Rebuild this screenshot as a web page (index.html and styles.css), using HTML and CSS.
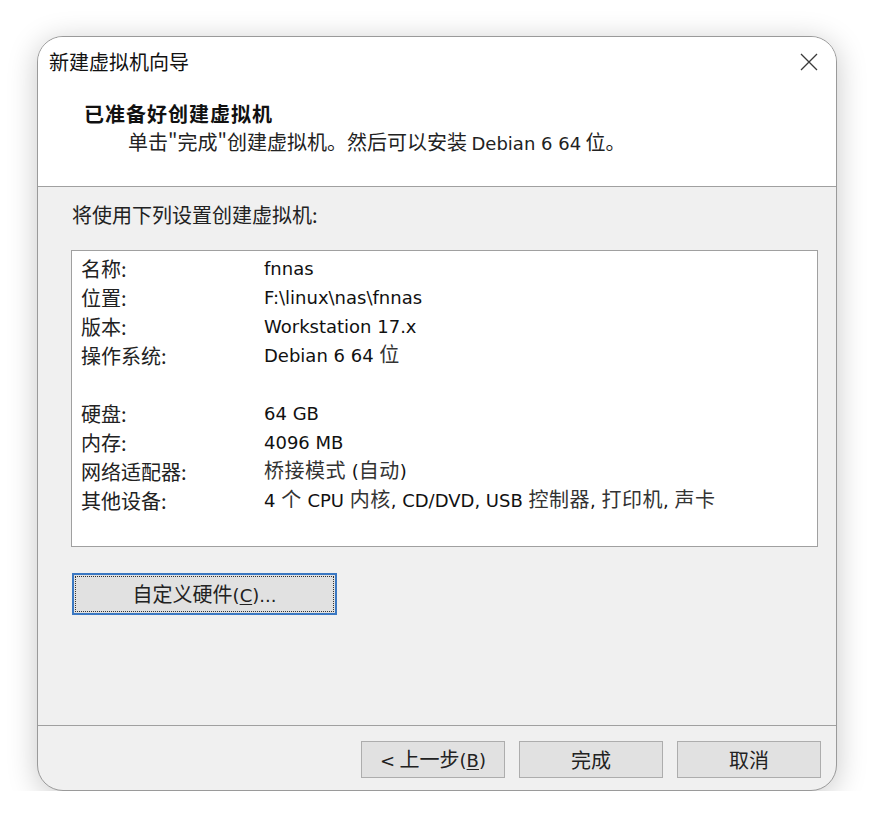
FILE: index.html
```html
<!DOCTYPE html>
<html lang="zh-CN">
<head>
<meta charset="utf-8">
<title>新建虚拟机向导</title>
<link rel="stylesheet" href="styles.css">
</head>
<body>
<div class="stage">
  <div class="dialog">
    <header class="header">
      <div class="titlebar">
        <span class="title">新建虚拟机向导</span>
        <button class="close" aria-label="关闭">
          <svg viewBox="0 0 18 18" width="18" height="18"><path d="M1 1L17 17M17 1L1 17" stroke="#3a3a3a" stroke-width="1.3" fill="none"/></svg>
        </button>
      </div>
      <h1 class="heading">已准备好创建虚拟机</h1>
      <p class="subtitle">单击"完成"创建虚拟机。然后可以安装 <span class="lat">Debian 6 64</span> 位。</p>
    </header>
    <main class="body">
      <p class="intro">将使用下列设置创建虚拟机:</p>
      <div class="summary">
        <div class="row"><span class="label">名称:</span><span class="value">fnnas</span></div>
        <div class="row"><span class="label">位置:</span><span class="value">F:\linux\nas\fnnas</span></div>
        <div class="row"><span class="label">版本:</span><span class="value">Workstation 17.x</span></div>
        <div class="row"><span class="label">操作系统:</span><span class="value">Debian 6 64 <span class="zh">位</span></span></div>
        <div class="row"></div>
        <div class="row"><span class="label">硬盘:</span><span class="value">64 GB</span></div>
        <div class="row"><span class="label">内存:</span><span class="value">4096 MB</span></div>
        <div class="row"><span class="label">网络适配器:</span><span class="value"><span class="zh">桥接模式</span> (<span class="zh">自动</span>)</span></div>
        <div class="row"><span class="label">其他设备:</span><span class="value">4 <span class="zh">个</span> CPU <span class="zh">内核</span>, CD/DVD, USB <span class="zh">控制器</span>, <span class="zh">打印机</span>, <span class="zh">声卡</span></span></div>
      </div>
      <button class="btn custom"><span>自定义硬件<span class="lat">(<u>C</u>)...</span></span></button>
    </main>
    <footer class="footer">
      <button class="btn"><span><span class="lat">&lt;</span> 上一步<span class="lat">(<u>B</u>)</span></span></button>
      <button class="btn"><span>完成</span></button>
      <button class="btn"><span>取消</span></button>
    </footer>
  </div>
</div>
</body>
</html>
```

FILE: styles.css
```css
* { box-sizing: border-box; }

html, body {
  margin: 0;
  padding: 0;
  background: #ffffff;
}

body {
  font-family: "Noto Sans CJK SC", sans-serif;
  color: #151515;
}

.stage {
  padding: 36px 0 0 37px;
}

.dialog {
  width: 800px;
  height: 755px;
  display: flex;
  flex-direction: column;
  background: #f0f0f0;
  border: 1px solid #9a9a9a;
  border-radius: 26px;
  overflow: hidden;
  box-shadow: 0 5px 30px rgba(0, 0, 0, 0.22);
}

.lat {
  font-family: "DejaVu Sans", sans-serif;
  font-size: 18px;
  line-height: 1;
}

.zh {
  font-family: "Noto Sans CJK SC", sans-serif;
  font-size: 20px;
  line-height: 1;
}

/* header */
.header {
  background: #ffffff;
  border-bottom: 1px solid #a0a0a0;
  padding-bottom: 30px;
}

.titlebar {
  height: 49px;
  display: flex;
  align-items: center;
  justify-content: space-between;
  padding: 0 18px 0 11px;
}

.title {
  font-size: 20px;
  line-height: 28px;
  color: #111;
}

.close {
  border: 0;
  background: transparent;
  padding: 0;
  width: 18px;
  height: 18px;
  display: flex;
}

.heading {
  margin: 14px 0 0 46px;
  font-size: 20px;
  line-height: 28px;
  height: 28px;
  font-weight: 700;
  letter-spacing: 1px;
  color: #111;
}

.subtitle {
  margin: 0 0 0 90px;
  font-size: 20px;
  line-height: 28px;
  height: 28px;
  color: #222;
}

/* body */
.body {
  flex: 1;
  padding: 14px 18px 0 33px;
  display: flex;
  flex-direction: column;
  align-items: flex-start;
}

.intro {
  margin: 0 0 21px 1px;
  font-size: 20px;
  line-height: 28px;
  height: 28px;
  color: #222;
}

.summary {
  align-self: stretch;
  height: 297px;
  background: #ffffff;
  border: 1px solid #a0a0a0;
  padding: 3px 0 0 9px;
}

.row {
  height: 29px;
  display: flex;
  align-items: center;
}

.label {
  width: 183px;
  flex: none;
  font-size: 20px;
  line-height: 29px;
  color: #222;
}

.value {
  font-family: "DejaVu Sans", "Noto Sans CJK SC", sans-serif;
  font-size: 18px;
  line-height: 29px;
  color: #111;
  white-space: nowrap;
}

.value .zh {
  color: #333;
  letter-spacing: 0.5px;
}

/* buttons */
.btn {
  font-family: "Noto Sans CJK SC", sans-serif;
  font-size: 20px;
  color: #222;
  width: 144px;
  height: 37px;
  padding: 0;
  background: #e1e1e1;
  border: 1px solid #adadad;
  display: flex;
  align-items: center;
  justify-content: center;
  line-height: 1;
}

.btn u {
  text-underline-offset: 2px;
}

.custom {
  margin: 26px 0 0 1px;
  width: 265px;
  height: 42px;
  border: 2px solid #3b78c2;
  outline: 1px dotted #333;
  outline-offset: -4px;
}

/* footer */
.footer {
  height: 65px;
  border-top: 1px solid #a0a0a0;
  padding: 15px 15px 0 0;
  display: flex;
  justify-content: flex-end;
  align-items: flex-start;
  gap: 14px;
}
```
